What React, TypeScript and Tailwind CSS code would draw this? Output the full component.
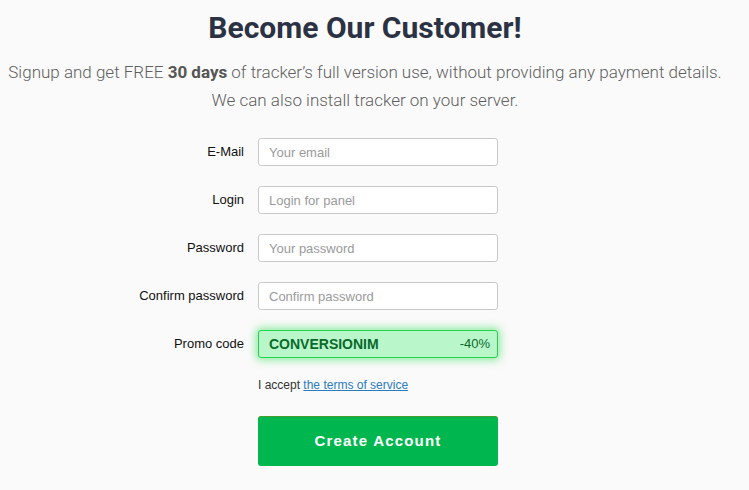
const rows = [
  { label: "E-Mail", placeholder: "Your email" },
  { label: "Login", placeholder: "Login for panel" },
  { label: "Password", placeholder: "Your password" },
  { label: "Confirm password", placeholder: "Confirm password" },
];

export default function App() {
  return (
    <div className="w-[749px] h-[490px] bg-[#fafafa] overflow-hidden" style={{ fontFamily: "Roboto, sans-serif" }}>
      <div className="pr-[19px]">
        <h1 className="pt-[10px] text-center text-[30px] leading-[36px] font-bold text-[#2b3244]">Become Our Customer!</h1>
        <p className="mt-[12px] text-center text-[17px] leading-[28px] font-light text-[#5f5f5f]">
          Signup and get FREE <b className="font-bold text-[#555]">30 days</b> of tracker’s full version use, without providing any payment details.
          <br />
          We can also install tracker on your server.
        </p>
      </div>

      <div className="mt-[24px] flex flex-col gap-[20px] font-['Liberation_Sans',Arial,sans-serif]">
        {rows.map((r) => (
          <div key={r.label} className="flex items-center">
            <label className="w-[244px] text-right text-[13px] text-[#111]">{r.label}</label>
            <input
              className="ml-[14px] w-[240px] h-[28px] px-[10px] rounded-[3px] border border-[#c9c9c9] bg-white text-[13px] placeholder:text-[#9a9a9a] outline-none"
              placeholder={r.placeholder}
            />
          </div>
        ))}
        <div className="flex items-center">
          <label className="w-[244px] text-right text-[13px] text-[#111]">Promo code</label>
          <div className="ml-[14px] w-[240px] h-[28px] px-[10px] rounded-[3px] border border-[#22d34a] bg-[#b9f7cb] shadow-[0_0_8px_2px_rgba(40,220,80,0.55)] flex items-center justify-between text-[#0a6a2b]">
            <span className="text-[14px] font-bold">CONVERSIONIM</span>
            <span className="text-[13px] mr-[-3px]">-40%</span>
          </div>
        </div>
      </div>

      <div className="mt-[18px] ml-[258px] text-[12px] text-[#333] font-['Liberation_Sans',Arial,sans-serif]">
        I accept <a href="#" className="text-[#2b7bbd] underline">the terms of service</a>
      </div>

      <button className="mt-[22px] ml-[258px] w-[240px] h-[50px] rounded-[3px] bg-[#00b74f] border-t border-[#4a9a2c] text-white text-[15px] font-bold tracking-[1.2px] font-['Liberation_Sans',Arial,sans-serif]">
        Create Account
      </button>
    </div>
  );
}
